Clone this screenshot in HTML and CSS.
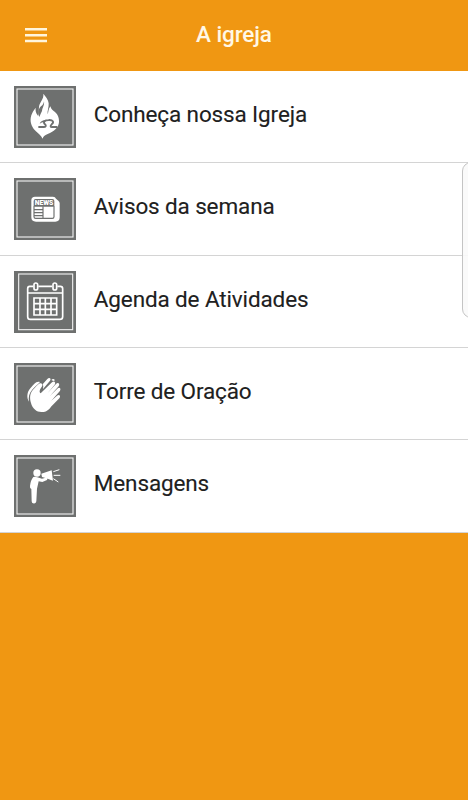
FILE: index.html
```html
<!DOCTYPE html>
<html lang="pt-BR">
<head>
<meta charset="utf-8">
<title>A igreja</title>
<link rel="stylesheet" href="styles.css">
</head>
<body>
<header class="bar">
  <button class="menu" aria-label="Menu"><svg class="burger" viewBox="0 0 22 16"><path d="M0 2.3H22M0 8.2H22M0 14.1H22"/></svg></button>
  <h1 class="title">A igreja</h1>
</header>
<main class="list">
  <a class="row">
    <svg class="icon" viewBox="19 18 186 186">
      <rect class="tile" x="19" y="18" width="186" height="186"/><rect class="frame" x="28" y="27" width="168" height="168"/>
      <path class="fill" d="M107 41C109 57 96 66 94 80C93 90 94 101 91 107C84 99 83 91 84 83C72 98 66 113 70 130C74 147 88 157 94 162C99 167 102 171 105 176C106 169 111 166 120 162C140 154 153 142 154 126C155 110 147 100 139 94C132 89 129 85 129 79C121 87 123 97 120 103C118 94 124 82 123 70C122 58 114 50 107 41Z"/>
      <path class="hole" d="M109 64C111 76 104 83 103 93C98 102 96 110 95 111C88 97 94 85 100 79C106 75 108 70 109 64Z"/>
      <path class="omega" d="M92 141H108C114 141 117 137 112 133C105 126 111 120 123 120C136 119 140 127 132 133C127 138 128 142 134 141H149"/>
      <path class="hole" d="M96 131Q101 119 117 120L110 126Q102 126 96 131Z"/>
    </svg>
    <span class="label">Conheça nossa Igreja</span>
  </a>
  <a class="row">
    <svg class="icon" viewBox="19 19 186 186">
      <rect class="tile" x="19" y="19" width="186" height="186"/><rect class="frame" x="28" y="28" width="168" height="168"/>
      <path class="fill" d="M82 75H136Q143 75 145 81L152 87Q156 90 156 95V137Q156 150 143 150H85Q71 150 71 137V86Q71 75 82 75Z"/>
      <path class="hole" d="M84 82H134Q140 82 140 88V105H78V88Q78 82 84 82Z"/>
      <path class="cut" d="M79 104V135Q79 140 84 140H134Q139 140 139 135V104M106 104V140M80 114H106M80 123H106M80 132H106"/>
      <text class="news" x="109" y="101" textLength="56" lengthAdjust="spacingAndGlyphs">NEWS</text>
    </svg>
    <span class="label">Avisos da semana</span>
  </a>
  <a class="row">
    <svg class="icon" viewBox="19 20 186 186">
      <rect class="tile" x="19" y="20" width="186" height="186"/><rect class="frame" x="33" y="29" width="162" height="167"/>
      <path class="line" d="M77 66H66Q60 66 60 73V157Q60 165 68 165H156Q165 165 165 157V73Q165 66 158 66H149M92 66H133M60 86H165"/>
      <rect class="line" x="79" y="56" width="11" height="21" rx="5.5"/><rect class="line" x="136" y="56" width="11" height="21" rx="5.5"/>
      <path class="grid" d="M79 101H147V152H79ZM97 100V153M113 100V153M130 100V153M78 118H148M78 135H148"/>
    </svg>
    <span class="label">Agenda de Atividades</span>
  </a>
  <a class="row">
    <svg class="icon" viewBox="19 21 186 186">
      <rect class="tile" x="19" y="21" width="186" height="186"/><rect class="frame" x="28" y="30" width="168" height="168"/>
      <path class="fill" d="M97 78C84 75 79 85 68 97C58 108 56 126 64 137C62 124 64 113 73 102C81 92 90 86 97 78Z"/>
      <path class="fill" d="M100 82C95 80 88 89 78 99C67 110 65 124 70 141C74 158 87 168 101 168C115 169 123 162 130 152L155 127C161 119 154 114 148 119L131 134L156 106C162 98 155 92 149 98L126 121L153 91C158 83 151 78 145 84L120 111L141 86C146 79 139 73 133 79L99 112C93 108 97 99 102 93C106 88 104 84 100 82Z"/>
      <path class="fill" d="M105 85L119 69C125 62 132 68 127 74L106 99Q109 91 105 85ZM131 72Q137 66 142 73L137 75Z"/>
    </svg>
    <span class="label">Torre de Oração</span>
  </a>
  <a class="row">
    <svg class="icon" viewBox="19 22 186 186">
      <rect class="tile" x="19" y="22" width="186" height="186"/><rect class="frame" x="28" y="31" width="168" height="168"/>
      <circle class="fill" cx="88" cy="76" r="11"/>
      <path class="fill" d="M77 88Q82 86 89 89L103 93L114 90Q121 91 118 97L104 103L93 101L88 123L86 161Q85 168 79 167Q72 168 72 161L71 124Q66 123 67 115Q69 97 77 88ZM101 78L132 68L136 99L116 92L103 88Z"/>
      <path class="rays" d="M137 72L155 66M138 83L158 83M137 93L152 103"/>
    </svg>
    <span class="label">Mensagens</span>
  </a>
</main>
<div class="handle"></div>
</body>
</html>
```
FILE: styles.css
```css
* { box-sizing: border-box; }
body {
  margin: 0;
  height: 800px;
  overflow: hidden;
  position: relative;
  background: #f09712;
  font-family: Roboto, sans-serif;
}
.bar {
  height: 71px;
  display: grid;
  grid-template-columns: 72px 1fr 72px;
  align-items: center;
}
.menu {
  width: 22px;
  margin: 0 0 1px 25px;
  padding: 0;
  border: 0;
  background: none;
}
.burger { display: block; width: 22px; height: 16px; }
.burger path { stroke: #fff5dc; stroke-width: 2.5; }
.title {
  margin: 0;
  padding-bottom: 4px;
  text-align: center;
  font-size: 22.5px;
  font-weight: 500;
  letter-spacing: -.1px;
  color: #fff8e6;
}
.list { background: #fff; }
.row {
  height: 92.35px;
  display: flex;
  align-items: flex-start;
  gap: 17.5px;
  padding: 15px 14px 0 14.3px;
  border-bottom: 1px solid #d4d4d4;
}
.icon { width: 62px; height: 62px; flex: none; }
.label {
  margin-top: 14px;
  font-size: 22.5px;
  line-height: 28px;
  letter-spacing: -.13px;
  -webkit-text-stroke: .12px #202020;
  color: #202020;
  white-space: nowrap;
}
.tile { fill: #6e706f; }
.frame { fill: none; stroke: #f0f0f0; stroke-width: 3.4; }
.fill { fill: #fff; }
.hole { fill: #6e706f; }
.omega { fill: none; stroke: #6e706f; stroke-width: 5.5; }
.cut { fill: none; stroke: #6e706f; stroke-width: 3.5; }
.line { fill: none; stroke: #fff; stroke-width: 5; }
.grid { fill: none; stroke: #fff; stroke-width: 5; }
.rays { fill: none; stroke: #fff; stroke-width: 3; }
.news { font: 900 19px Roboto, sans-serif; text-anchor: middle; fill: #fff; }
.handle {
  position: absolute;
  left: 462px;
  top: 162px;
  width: 20px;
  height: 156px;
  border: 1px solid #c4c4c4;
  border-radius: 9px;
  background: rgba(250, 250, 250, .9);
}
```
